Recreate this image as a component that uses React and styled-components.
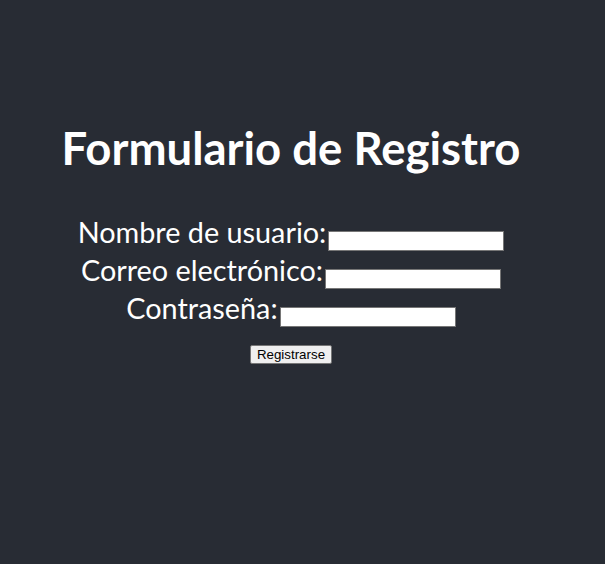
import React from 'react';
import styled, { createGlobalStyle } from 'styled-components';

const GlobalStyle = createGlobalStyle`
  body {
    margin: 0;
    font-family: Lato, "Open Sans", sans-serif;
  }
`;

const Header = styled.div`
  background-color: #282c34;
  min-height: 100vh;
  box-sizing: border-box;
  padding: 121px 23px 0 0;
  display: flex;
  flex-direction: column;
  align-items: center;
  font-size: 28.8px;
  color: white;
`;

const Title = styled.h1`
  font-size: 45.5px;
  line-height: 54px;
  font-weight: 700;
  margin: 0 0 40px;
`;

const Form = styled.form`
  display: flex;
  flex-direction: column;
  align-items: center;
`;

const Row = styled.div`
  display: flex;
  align-items: baseline;
  height: 38px;
  line-height: 35px;
`;

const Field = styled.input`
  width: 174px;
  height: 18px;
  border: 1px solid #767676;
  padding: 0;
  margin: 0 0 0 2px;
  background: white;
  position: relative;
  top: 2px;
`;

const Submit = styled.button`
  margin-top: 16px;
  font-family: "Liberation Sans", Arial, sans-serif;
  font-size: 13.33px;
  padding: 1px 6px;
  background: #efefef;
  border: 1px solid #767676;
  border-radius: 2px;
  color: black;
`;

export default function App() {
  return (
    <>
      <GlobalStyle />
      <Header>
        <Title>Formulario de Registro</Title>
        <Form onSubmit={e => e.preventDefault()}>
          <Row>
            <label>Nombre de usuario:</label>
            <Field type="text" />
          </Row>
          <Row>
            <label>Correo electrónico:</label>
            <Field type="email" />
          </Row>
          <Row>
            <label>Contraseña:</label>
            <Field type="password" />
          </Row>
          <Submit type="submit">Registrarse</Submit>
        </Form>
      </Header>
    </>
  );
}
